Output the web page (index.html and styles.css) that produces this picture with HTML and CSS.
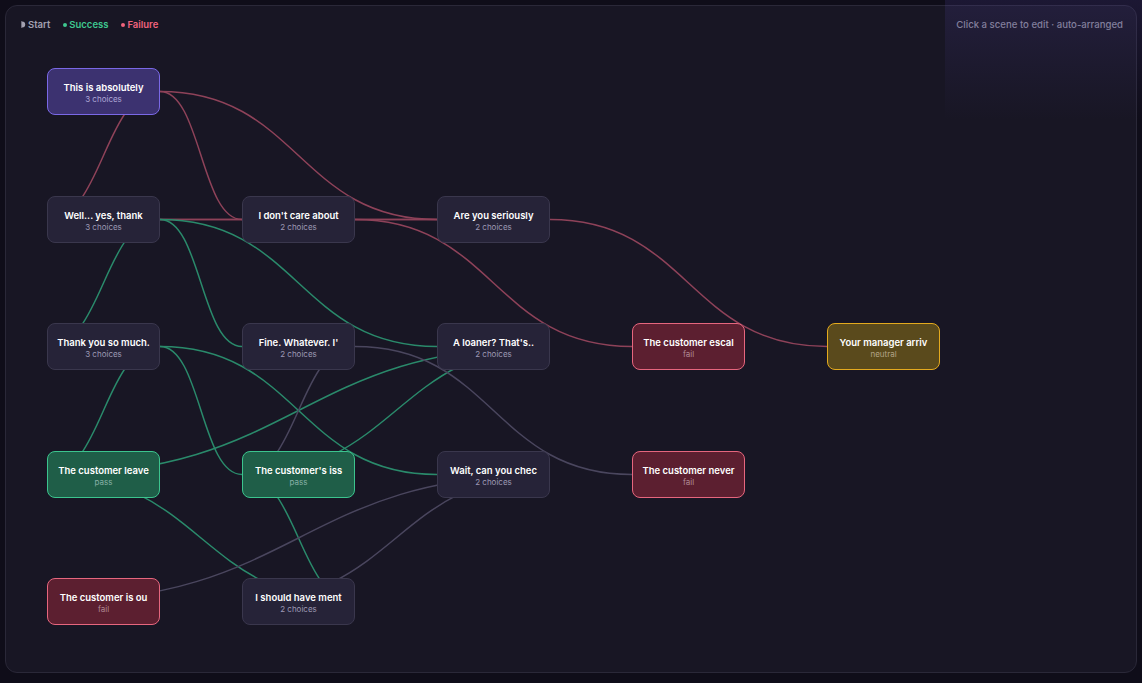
FILE: index.html
```html
<!DOCTYPE html>
<html lang="en">
<head>
    <meta charset="UTF-8">
    <meta name="viewport" content="width=device-width, initial-scale=1.0">
    <title>Scene Graph</title>
    <link rel="stylesheet" href="styles.css">
</head>
<body>
    <!-- Corner glow -->
    <div class="glow"></div>

    <div class="panel">
        <!-- Legend / hint bar -->
        <div class="topbar">
            <div class="legend">
                <span class="legend-item legend-start">
                    <svg width="5" height="7" viewBox="0 0 5 7"><path d="M0 0.5h1.2a3 3 0 0 1 0 6H0z" fill="#a3a1b0"/><rect x="0" y="0.5" width="0.9" height="6" fill="#6d6b7a"/></svg>
                    Start
                </span>
                <span class="legend-item legend-success"><i class="dot"></i>Success</span>
                <span class="legend-item legend-failure"><i class="dot"></i>Failure</span>
            </div>
            <div class="hint">Click a scene to edit · auto-arranged</div>
        </div>

        <!-- Graph canvas -->
        <div class="canvas" id="canvas">
            <svg class="edges" id="edges" width="1130" height="666"></svg>
        </div>
    </div>

    <script>
        const NODE_W = 113;
        const NODE_H = 47;
        const COL_X = 41, COL_GAP = 195;
        const ROW_Y = 62, ROW_GAP = 127.6;

        const nodes = {
            start:   { col: 0, row: 0, title: 'This is absolutely', sub: '3 choices', type: 'start' },
            well:    { col: 0, row: 1, title: 'Well... yes, thank', sub: '3 choices', type: 'scene' },
            thanks:  { col: 0, row: 2, title: 'Thank you so much.', sub: '3 choices', type: 'scene' },
            leave:   { col: 0, row: 3, title: 'The customer leave', sub: 'pass', type: 'pass' },
            out:     { col: 0, row: 4, title: 'The customer is ou', sub: 'fail', type: 'fail' },
            dontcare:{ col: 1, row: 1, title: "I don't care about", sub: '2 choices', type: 'scene' },
            fine:    { col: 1, row: 2, title: "Fine. Whatever. I'", sub: '2 choices', type: 'scene' },
            issue:   { col: 1, row: 3, title: "The customer's iss", sub: 'pass', type: 'pass' },
            should:  { col: 1, row: 4, title: 'I should have ment', sub: '2 choices', type: 'scene' },
            serious: { col: 2, row: 1, title: 'Are you seriously', sub: '2 choices', type: 'scene' },
            loaner:  { col: 2, row: 2, title: "A loaner? That's..", sub: '2 choices', type: 'scene' },
            wait:    { col: 2, row: 3, title: 'Wait, can you chec', sub: '2 choices', type: 'scene' },
            escal:   { col: 3, row: 2, title: 'The customer escal', sub: 'fail', type: 'fail' },
            never:   { col: 3, row: 3, title: 'The customer never', sub: 'fail', type: 'fail' },
            manager: { col: 4, row: 2, title: 'Your manager arriv', sub: 'neutral', type: 'neutral' }
        };

        const edges = [
            ['start', 'well', 'bad'],
            ['start', 'dontcare', 'bad'],
            ['start', 'serious', 'bad'],
            ['well', 'dontcare', 'bad'],
            ['well', 'serious', 'bad'],
            ['dontcare', 'serious', 'bad'],
            ['dontcare', 'escal', 'bad'],
            ['serious', 'manager', 'bad'],
            ['well', 'fine', 'good'],
            ['well', 'loaner', 'good'],
            ['well', 'thanks', 'good'],
            ['thanks', 'leave', 'good'],
            ['thanks', 'issue', 'good'],
            ['thanks', 'wait', 'good'],
            ['loaner', 'leave', 'good'],
            ['loaner', 'issue', 'good'],
            ['should', 'leave', 'good'],
            ['should', 'issue', 'good'],
            ['fine', 'issue', 'meh'],
            ['fine', 'never', 'meh'],
            ['wait', 'out', 'meh'],
            ['wait', 'should', 'meh']
        ];

        const canvas = document.getElementById('canvas');
        const svg = document.getElementById('edges');

        Object.values(nodes).forEach(n => {
            n.x = COL_X + n.col * COL_GAP;
            n.y = ROW_Y + Math.round(n.row * ROW_GAP);
            const el = document.createElement('div');
            el.className = 'node node-' + n.type;
            el.style.left = n.x + 'px';
            el.style.top = n.y + 'px';
            el.innerHTML = `<div class="node-title">${n.title}</div><div class="node-sub">${n.sub}</div>`;
            canvas.appendChild(el);
        });

        edges.forEach(([from, to, kind]) => {
            const a = nodes[from], b = nodes[to];
            const sx = a.x + NODE_W, sy = a.y + NODE_H / 2;
            const tx = b.x, ty = b.y + NODE_H / 2;
            const mx = (sx + tx) / 2;
            const path = document.createElementNS('http://www.w3.org/2000/svg', 'path');
            path.setAttribute('d', `M${sx},${sy} C${mx},${sy} ${mx},${ty} ${tx},${ty}`);
            path.setAttribute('class', 'edge edge-' + kind);
            svg.appendChild(path);
        });
    </script>
</body>
</html>
```

FILE: styles.css
```css
body {
    margin: 0;
    padding: 5px;
    background-color: #0f0d19;
    font-family: Inter, "Noto Sans", sans-serif;
    color: #fff;
}

.glow {
    position: absolute;
    top: 0;
    right: 0;
    width: 197px;
    height: 120px;
    background: linear-gradient(180deg, rgba(86, 70, 170, 0.18) 0%, rgba(86, 70, 170, 0.08) 55%, rgba(86, 70, 170, 0) 100%);
    pointer-events: none;
    z-index: 3;
}

.panel {
    position: relative;
    height: 666px;
    background-color: #181624;
    border: 1px solid #2a2838;
    border-radius: 12px;
    overflow: hidden;
}

.topbar {
    position: relative;
    z-index: 2;
    display: flex;
    justify-content: space-between;
    align-items: center;
    padding: 12px 13px 0 15px;
    height: 12px;
}

.legend {
    display: flex;
    gap: 13px;
    font-size: 9.5px;
    font-weight: 600;
}

.legend-item {
    display: flex;
    align-items: center;
    gap: 2px;
}

.legend-start {
    color: #a3a1b0;
}

.legend-success {
    color: #3ec78f;
}

.legend-failure {
    color: #f0637d;
}

.dot {
    display: inline-block;
    width: 4px;
    height: 4px;
    border-radius: 50%;
    background-color: currentColor;
    margin-top: 2px;
}

.hint {
    font-size: 9.6px;
    font-weight: 500;
    color: #8a889a;
}

.canvas {
    position: absolute;
    inset: 0;
}

.edges {
    position: absolute;
    left: 0;
    top: 0;
}

.edge {
    fill: none;
    stroke-width: 1.5;
}

.edge-bad {
    stroke: #8e4259;
}

.edge-good {
    stroke: #2a8a6b;
}

.edge-meh {
    stroke: #4a465e;
}

.node {
    position: absolute;
    box-sizing: border-box;
    width: 113px;
    height: 47px;
    border-radius: 8px;
    border: 1px solid #3a374d;
    background-color: #262338;
    display: flex;
    flex-direction: column;
    align-items: center;
    justify-content: center;
    gap: 1px;
    padding-top: 2px;
    cursor: pointer;
}

.node-title {
    font-size: 9.5px;
    font-weight: 600;
    color: #ffffff;
    white-space: nowrap;
}

.node-sub {
    font-size: 8px;
    color: #9d99b4;
}

.node-start {
    background-color: #3c3270;
    border: 1.5px solid #7a68e6;
}

.node-start .node-sub {
    color: #aea7d6;
}

.node-pass {
    background-color: #1f5e48;
    border: 1.5px solid #3cc48e;
}

.node-pass .node-sub {
    color: #86b0a6;
}

.node-fail {
    background-color: #5c1f30;
    border: 1.5px solid #e6667e;
}

.node-fail .node-sub {
    color: #b08894;
}

.node-neutral {
    background-color: #5a4a1c;
    border: 1.5px solid #e4aa1e;
}

.node-neutral .node-sub {
    color: #b3a586;
}
```
